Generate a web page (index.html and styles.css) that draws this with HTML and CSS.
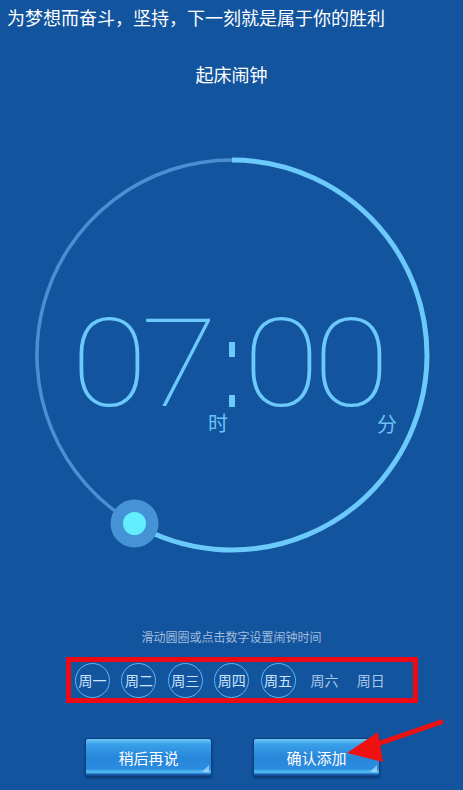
FILE: index.html
```html
<!DOCTYPE html>
<html lang="zh">
<head>
<meta charset="utf-8">
<title>起床闹钟</title>
<link rel="stylesheet" href="styles.css">
</head>
<body>
<div class="page">
  <div class="slogan">为梦想而奋斗，坚持，下一刻就是属于你的胜利</div>
  <div class="title">起床闹钟</div>

  <div class="dial">
    <svg class="ring" width="463" height="410" viewBox="0 0 463 410">
      <path d="M232 10 A195 195 0 1 1 134.5 373.9" fill="none" stroke="#6cc9fb" stroke-width="5"/>
      <path d="M134.5 373.9 A195 195 0 0 1 232 10" fill="none" stroke="#4b8fd3" stroke-width="3.5"/>
      <circle cx="134.5" cy="373.5" r="24" fill="#4592d4"/>
      <circle cx="134.5" cy="373.5" r="11.5" fill="#62eefe"/>
    </svg>
    <span class="digits hours">07</span>
    <span class="colon top"></span>
    <span class="colon bottom"></span>
    <span class="digits minutes">00</span>
    <span class="unit hour-unit">时</span>
    <span class="unit minute-unit">分</span>
  </div>

  <div class="hint">滑动圆圈或点击数字设置闹钟时间</div>

  <div class="days">
    <span class="day on">周一</span>
    <span class="day on">周二</span>
    <span class="day on">周三</span>
    <span class="day on">周四</span>
    <span class="day on">周五</span>
    <span class="day">周六</span>
    <span class="day">周日</span>
  </div>

  <div class="actions">
    <button class="btn">稍后再说</button>
    <button class="btn">确认添加</button>
  </div>

  <svg class="arrow" width="120" height="60" viewBox="0 0 120 60">
    <line x1="118" y1="3" x2="40" y2="30" stroke="#ee1111" stroke-width="5" stroke-linecap="round"/>
    <polygon points="24,34 55,13 60,43" fill="#ee1111"/>
  </svg>
</div>
</body>
</html>
```

FILE: styles.css
```css
html, body {
  margin: 0;
  padding: 0;
}
body {
  background: #12549e;
  font-family: "Noto Sans CJK SC", "Noto Sans", sans-serif;
  color: #ffffff;
  width: 463px;
  height: 790px;
  overflow: hidden;
}
.page {
  position: relative;
  width: 463px;
  height: 790px;
}
.slogan {
  padding: 5px 0 0 7px;
  height: 31px;
  font-size: 18px;
  line-height: 24px;
  white-space: nowrap;
}
.title {
  margin-top: 23px;
  text-align: center;
  font-size: 18px;
  line-height: 30px;
  height: 30px;
}
.dial {
  position: relative;
  margin-top: 61px;
  height: 410px;
}
.ring {
  position: absolute;
  left: 0;
  top: 0;
}
.digits {
  position: absolute;
  top: 169px;
  font-family: Roboto, "Liberation Sans", sans-serif;
  font-weight: 100;
  font-size: 122px;
  line-height: 92px;
  color: #6cc9fb;
  letter-spacing: -6px;
  white-space: nowrap;
  transform: scaleX(1.15);
  transform-origin: left top;
}
.hours { left: 71px; }
.minutes { left: 243px; }
.colon {
  position: absolute;
  left: 229px;
  width: 6px;
  background: #6cc9fb;
}
.colon.top { top: 192px; height: 15px; }
.colon.bottom { top: 245px; height: 12px; }
.unit {
  position: absolute;
  font-size: 20px;
  line-height: 20px;
  color: #6cc2f4;
}
.hour-unit { left: 208px; top: 263px; }
.minute-unit { left: 377px; top: 264px; }
.hint {
  margin-top: 69px;
  text-align: center;
  font-size: 12px;
  line-height: 16px;
  color: #a3bddd;
}
.days {
  margin: 12px 0 0 66px;
  width: 338px;
  height: 36px;
  border: 5px solid #ee0a14;
  display: flex;
  align-items: center;
  gap: 11.4px;
  padding-left: 4px;
}
.day {
  box-sizing: border-box;
  width: 35px;
  height: 35px;
  border-radius: 50%;
  display: flex;
  align-items: center;
  justify-content: center;
  font-size: 14px;
  color: #a8c8ea;
  flex: none;
  white-space: nowrap;
}
.day.on {
  border: 1.5px solid #5cb8ef;
  color: #cde6ff;
}
.actions {
  margin: 35px 0 0 85px;
  display: flex;
  gap: 41px;
}
.btn {
  position: relative;
  width: 127px;
  height: 39px;
  border: 1px solid #0b3c7c;
  border-radius: 3px;
  background: linear-gradient(#6ccaf8 0%, #3aa0ea 14%, #2786da 50%, #2a8ce0 80%, #56bff4 90%, #1d66bc 95%, #0e3f82 100%);
  color: #ffffff;
  font-family: "Noto Sans CJK SC", sans-serif;
  font-size: 15px;
  padding: 0;
  box-shadow: 0 1px 2px rgba(0, 20, 60, 0.5);
}
.btn::after {
  content: "";
  position: absolute;
  right: 2px;
  bottom: 4px;
  width: 0;
  height: 0;
  border-left: 7px solid transparent;
  border-bottom: 7px solid rgba(200, 235, 255, 0.6);
}
.arrow {
  position: absolute;
  left: 323px;
  top: 719px;
}
```
